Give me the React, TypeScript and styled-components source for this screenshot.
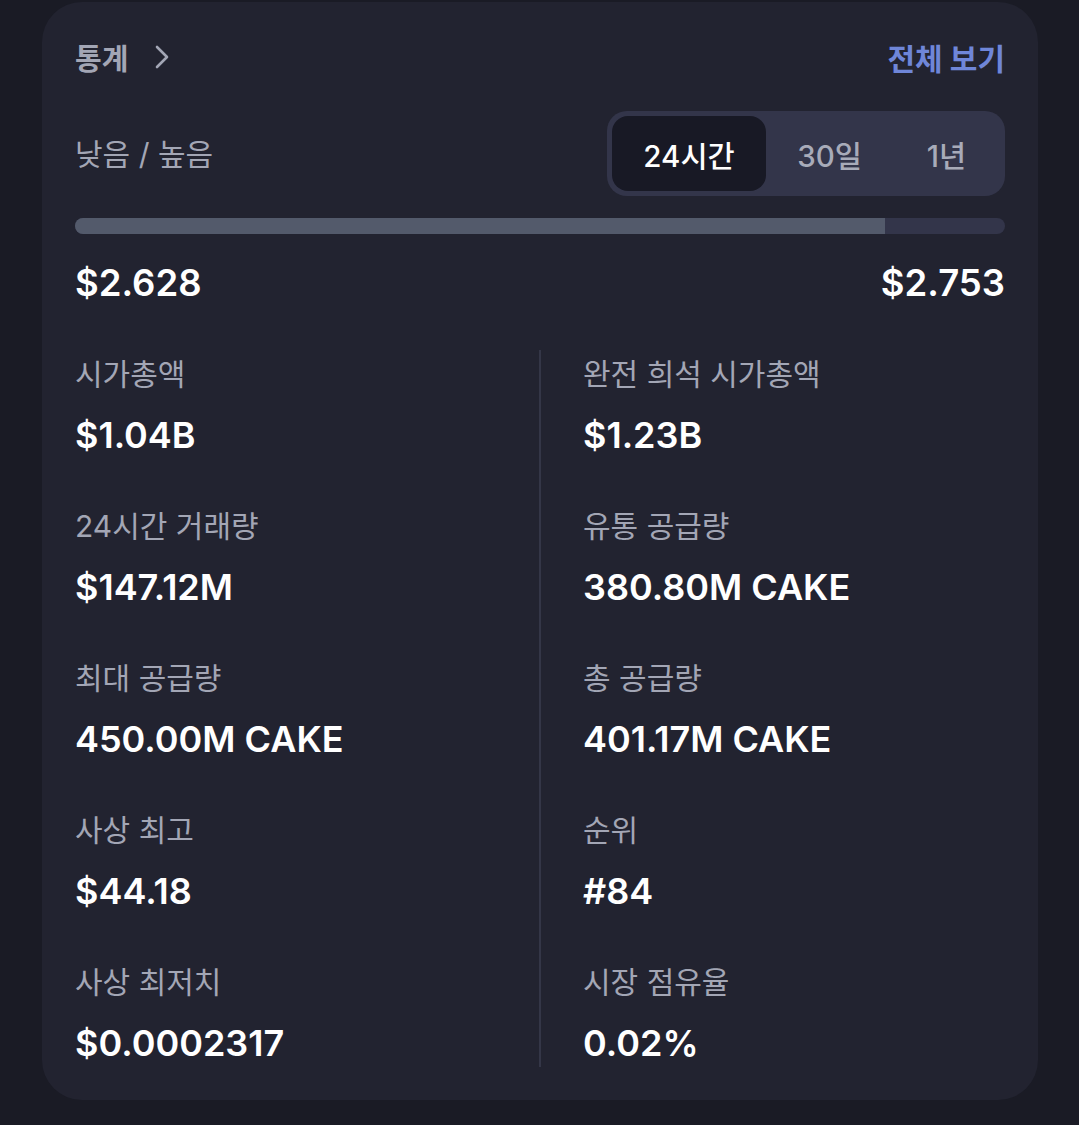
import React from "react";
import styled, { createGlobalStyle } from "styled-components";

const GlobalStyle = createGlobalStyle`
  html, body {
    margin: 0;
    padding: 0;
    background: #1a1b25;
  }
  body {
    font-family: Inter, "Noto Sans CJK KR", sans-serif;
    -webkit-font-smoothing: antialiased;
  }
`;

const Card = styled.section`
  box-sizing: border-box;
  width: 996px;
  height: 1098px;
  margin: 2px 0 0 42px;
  padding: 36px 33px 33px;
  background: #222330;
  border-radius: 40px;
  display: flex;
  flex-direction: column;
`;

const Header = styled.div`
  display: flex;
  align-items: center;
  justify-content: space-between;
  height: 38px;
`;

const Title = styled.div`
  display: flex;
  align-items: center;
  gap: 26px;
  color: #a3a6b5;
  font-size: 29px;
  font-weight: 700;
`;

const ViewAll = styled.a`
  color: #6f86d8;
  font-size: 30px;
  font-weight: 700;
  text-decoration: none;
`;

const RangeRow = styled.div`
  display: flex;
  align-items: center;
  justify-content: space-between;
  margin-top: 35px;
`;

const Label = styled.div`
  color: #a3a6b5;
  font-size: 30px;
  line-height: 36px;
`;

const Segment = styled.div`
  display: flex;
  box-sizing: border-box;
  height: 85px;
  width: 398px;
  padding: 5px;
  background: #33354a;
  border-radius: 20px;
`;

const Tab = styled.button<{ active?: boolean }>`
  border: none;
  cursor: pointer;
  height: 75px;
  width: ${(p) => (p.active ? "154px" : "auto")};
  flex: ${(p) => (p.active ? "none" : "1")};
  border-radius: 16px;
  background: ${(p) => (p.active ? "#181925" : "transparent")};
  color: ${(p) => (p.active ? "#ffffff" : "#a8abb9")};
  font-family: inherit;
  font-size: 29.5px;
  font-weight: 500;
  padding: 0 0 0 ${(p) => (p.active ? "0" : "10px")};
`;

const Track = styled.div`
  margin-top: 22px;
  height: 16px;
  border-radius: 8px;
  background: #33354a;
  overflow: hidden;
`;

const Fill = styled.div`
  height: 100%;
  background: #535a6b;
`;

const Prices = styled.div`
  display: flex;
  justify-content: space-between;
  margin-top: 27px;
  color: #ffffff;
  font-size: 36.5px;
  font-weight: 600;
  line-height: 44px;
`;

const Grid = styled.div`
  display: grid;
  grid-template-columns: 464px 1fr;
  margin-top: 45px;
`;

const Column = styled.div<{ divided?: boolean }>`
  display: flex;
  flex-direction: column;
  gap: 51px;
  padding-top: 6px;
  padding-bottom: 2px;
  ${(p) => (p.divided ? "border-left: 2px solid #343647; padding-left: 42px;" : "")}
`;

const Stat = styled.div`
  display: flex;
  flex-direction: column;
  gap: 21px;
`;

const Value = styled.div`
  color: #ffffff;
  font-size: 36px;
  font-weight: 600;
  line-height: 44px;
`;

const Chevron = () => (
  <svg width="16" height="26" viewBox="0 0 16 26" fill="none">
    <path
      d="M3 3l10 10-10 10"
      stroke="#a3a6b5"
      strokeWidth="2.6"
      strokeLinecap="round"
      strokeLinejoin="round"
    />
  </svg>
);

const left = [
  ["시가총액", "$1.04B"],
  ["24시간 거래량", "$147.12M"],
  ["최대 공급량", "450.00M CAKE"],
  ["사상 최고", "$44.18"],
  ["사상 최저치", "$0.0002317"],
];

const right = [
  ["완전 희석 시가총액", "$1.23B"],
  ["유통 공급량", "380.80M CAKE"],
  ["총 공급량", "401.17M CAKE"],
  ["순위", "#84"],
  ["시장 점유율", "0.02%"],
];

const App = () => {
  const [range, setRange] = React.useState("24시간");
  const low = 2.628;
  const high = 2.753;
  const fill = 87.1;

  return (
    <>
      <GlobalStyle />
      <Card>
        <Header>
          <Title>
            통계
            <Chevron />
          </Title>
          <ViewAll href="#">전체 보기</ViewAll>
        </Header>
        <RangeRow>
          <Label>낮음 / 높음</Label>
          <Segment>
            {["24시간", "30일", "1년"].map((r) => (
              <Tab key={r} active={range === r} onClick={() => setRange(r)}>
                {r}
              </Tab>
            ))}
          </Segment>
        </RangeRow>
        <Track>
          <Fill style={{ width: `${fill}%` }} />
        </Track>
        <Prices>
          <span>${low.toFixed(3)}</span>
          <span>${high.toFixed(3)}</span>
        </Prices>
        <Grid>
          <Column>
            {left.map(([l, v]) => (
              <Stat key={l}>
                <Label>{l}</Label>
                <Value>{v}</Value>
              </Stat>
            ))}
          </Column>
          <Column divided>
            {right.map(([l, v]) => (
              <Stat key={l}>
                <Label>{l}</Label>
                <Value>{v}</Value>
              </Stat>
            ))}
          </Column>
        </Grid>
      </Card>
    </>
  );
};

export default App;
